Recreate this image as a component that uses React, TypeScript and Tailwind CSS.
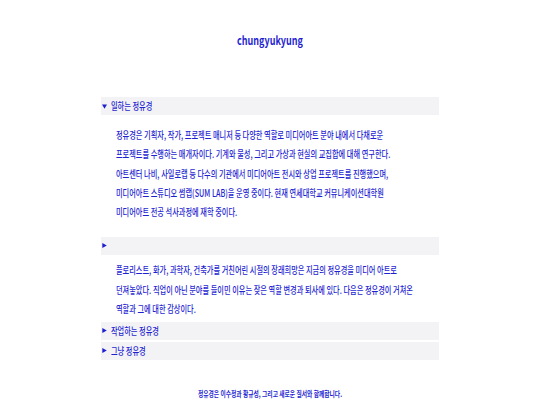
import React from 'react';

const sections = [
  {
    title: '일하는 정유경',
    open: true,
    lines: [
      '정유경은 기획자, 작가, 프로젝트 매니저 등 다양한 역할로 미디어아트 분야 내에서 다채로운',
      '프로젝트를 수행하는 매개자이다. 기계와 물성, 그리고 가상과 현실의 교집합에 대해 연구한다.',
      '아트센터 나비, 사일로랩 등 다수의 기관에서 미디어아트 전시와 상업 프로젝트를 진행했으며,',
      '미디어아트 스튜디오 썸랩(SUM LAB)을 운영 중이다. 현재 연세대학교 커뮤니케이션대학원',
      '미디어아트 전공 석사과정에 재학 중이다.',
    ],
  },
];

const intro = [
  '플로리스트, 화가, 과학자, 건축가를 거친어린 시절의 장래희망은 지금의 정유경을 미디어 아트로',
  '던져놓았다. 직업이 아닌 분야를 들이민 이유는 잦은 역할 변경과 퇴사에 있다. 다음은 정유경이 거쳐온',
  '역할과 그에 대한 감상이다.',
];

const font = "font-['Noto_Sans_CJK_KR','Noto_Sans',sans-serif]";

function Marker({ open }: { open?: boolean }) {
  return (
    <svg width="5" height="5" viewBox="0 0 5 5" className="shrink-0 fill-current">
      {open ? <path d="M0 0.5h5L2.5 4.8z" /> : <path d="M0.3 0v5L4.8 2.5z" />}
    </svg>
  );
}

function Bar({ label, open }: { label?: string; open?: boolean }) {
  return (
    <div className="flex h-[18px] items-center bg-[#f3f3f5] pl-[1px]">
      <Marker open={open} />
      {label && (
        <span className="ml-[4px] origin-left scale-x-[0.72] whitespace-nowrap text-[10px] font-medium leading-none">
          {label}
        </span>
      )}
    </div>
  );
}

function Lines({ lines }: { lines: string[] }) {
  return (
    <div className="pl-[15px]">
      {lines.map((line) => (
        <div
          key={line}
          className="origin-left scale-x-[0.72] whitespace-nowrap text-[10px] font-medium leading-[19.3px]"
        >
          {line}
        </div>
      ))}
    </div>
  );
}

export default function App(): React.ReactElement {
  return (
    <main className={`min-h-[405px] bg-white text-[#1f1fd2] ${font}`}>
      <div className="pt-[31px] text-center text-[12px] font-bold leading-[18px]">
        <div className="scale-x-[0.75]">chungyukyung</div>
      </div>

      <div className="mx-auto mt-[48px] w-[338px]">
        {sections.map((s) => (
          <div key={s.title}>
            <Bar label={s.title} open={s.open} />
            <div className="pt-[10px] pb-[15.5px]">
              <Lines lines={s.lines} />
            </div>
          </div>
        ))}

        {/* intro */}
        <Bar />
        <div className="pt-[5.5px] pb-[3.5px]">
          <Lines lines={intro} />
        </div>

        <div className="space-y-[2px]">
          <Bar label="작업하는 정유경" />
          <Bar label="그냥 정유경" />
        </div>
      </div>

      <div className="mt-[26px] text-center text-[8px] font-bold leading-[16px]">
        <div className="scale-x-[0.72]">정유경은 이수정과 황규성, 그리고 새로운 질서와 함께합니다.</div>
      </div>
    </main>
  );
}
